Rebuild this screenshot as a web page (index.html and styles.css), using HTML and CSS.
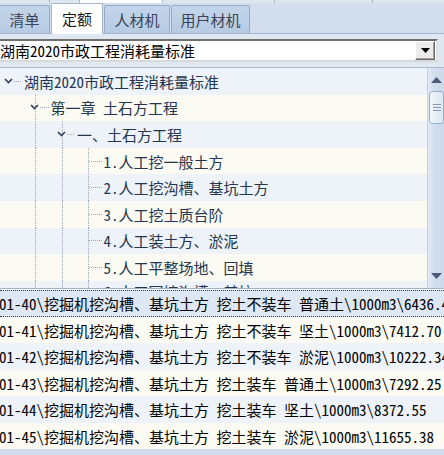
FILE: index.html
```html
<!DOCTYPE html>
<html>
<head>
<meta charset="utf-8">
<link rel="stylesheet" href="styles.css">
</head>
<body>
<div class="app">
  <div class="topstrip"><span class="ts ts-a"></span><span class="ts ts-b"></span><span class="ts ts-c"></span><span class="ts ts-d"></span><span class="ts ts-e"></span></div>
  <div class="tabbar">
    <div class="tab t1">清单</div>
    <div class="tab t2 active">定额</div>
    <div class="tab t3">人材机</div>
    <div class="tab t4">用户材机</div>
  </div>
  <div class="combo-wrap">
    <div class="combo">
      <span class="combo-text">湖南2020市政工程消耗量标准</span>
      <span class="combo-btn"><svg width="9" height="5" viewBox="0 0 9 5"><path d="M0 0H9L4.5 5Z" fill="#000"/></svg></span>
    </div>
  </div>
  <div class="tree-wrap">
    <div class="tree">
      <div class="row blue">
        <span class="cell node"><svg class="chev" width="9" height="6" viewBox="0 0 9 6"><polyline points="1,1 4.5,4.6 8,1" fill="none" stroke="#34445f" stroke-width="1.7"/></svg></span>
        <span class="label">湖南2020市政工程消耗量标准</span>
      </div>
      <div class="row cream">
        <span class="cell"></span>
        <span class="cell node vl"><svg class="chev" width="9" height="6" viewBox="0 0 9 6"><polyline points="1,1 4.5,4.6 8,1" fill="none" stroke="#34445f" stroke-width="1.7"/></svg></span>
        <span class="label">第一章 土石方工程</span>
      </div>
      <div class="row blue">
        <span class="cell"></span>
        <span class="cell vl"></span>
        <span class="cell node vl"><svg class="chev" width="9" height="6" viewBox="0 0 9 6"><polyline points="1,1 4.5,4.6 8,1" fill="none" stroke="#34445f" stroke-width="1.7"/></svg></span>
        <span class="label">一、土石方工程</span>
      </div>
      <div class="row cream">
        <span class="cell"></span><span class="cell vl"></span><span class="cell vl"></span>
        <span class="cell leaf"></span>
        <span class="label">1.人工挖一般土方</span>
      </div>
      <div class="row blue">
        <span class="cell"></span><span class="cell vl"></span><span class="cell vl"></span>
        <span class="cell leaf"></span>
        <span class="label">2.人工挖沟槽、基坑土方</span>
      </div>
      <div class="row cream">
        <span class="cell"></span><span class="cell vl"></span><span class="cell vl"></span>
        <span class="cell leaf"></span>
        <span class="label">3.人工挖土质台阶</span>
      </div>
      <div class="row blue">
        <span class="cell"></span><span class="cell vl"></span><span class="cell vl"></span>
        <span class="cell leaf"></span>
        <span class="label">4.人工装土方、淤泥</span>
      </div>
      <div class="row cream">
        <span class="cell"></span><span class="cell vl"></span><span class="cell vl"></span>
        <span class="cell leaf"></span>
        <span class="label">5.人工平整场地、回填</span>
      </div>
      <div class="row blue">
        <span class="cell"></span><span class="cell vl"></span><span class="cell vl"></span>
        <span class="cell leaf"></span>
        <span class="label last">6.人工回填沟槽、基坑</span>
      </div>
    </div>
    <div class="vscroll">
      <div class="sb-btn"><svg width="11" height="6" viewBox="0 0 11 6"><path d="M0 6H11L5.5 0Z" fill="#4d5a7a"/></svg></div>
      <div class="sb-track">
        <div class="sb-thumb"><span class="grip"></span><span class="grip"></span><span class="grip"></span></div>
      </div>
      <div class="sb-btn down"><svg width="11" height="6" viewBox="0 0 11 6"><path d="M0 0H11L5.5 6Z" fill="#4d5a7a"/></svg></div>
    </div>
  </div>
  <div class="list">
    <div class="lrow sel">01-40\挖掘机挖沟槽、基坑土方 挖土不装车 普通土\1000m3\6436.4</div>
    <div class="lrow cream">01-41\挖掘机挖沟槽、基坑土方 挖土不装车 坚土\1000m3\7412.70</div>
    <div class="lrow blue">01-42\挖掘机挖沟槽、基坑土方 挖土不装车 淤泥\1000m3\10222.34</div>
    <div class="lrow cream">01-43\挖掘机挖沟槽、基坑土方 挖土装车 普通土\1000m3\7292.25</div>
    <div class="lrow blue">01-44\挖掘机挖沟槽、基坑土方 挖土装车 坚土\1000m3\8372.55</div>
    <div class="lrow cream">01-45\挖掘机挖沟槽、基坑土方 挖土装车 淤泥\1000m3\11655.38</div>
  </div>
  <div class="bottom"></div>
</div>
</body>
</html>
```
FILE: styles.css
```css
* { box-sizing: border-box; margin: 0; padding: 0; }
html, body { width: 444px; height: 455px; overflow: hidden; }
body {
  background: #dbe5f1;
  font-family: "Noto Sans Mono CJK SC", "Noto Sans CJK SC", monospace;
  font-size: 15px;
}
.app { width: 444px; height: 455px; display: flex; flex-direction: column; overflow: hidden; }

.topstrip { height: 3px; display: flex; background: #dde5ef; flex: none; }
.ts { height: 3px; border-right: 1px solid #aab7c8; }
.ts-a { width: 50px; }
.ts-b { width: 30px; }
.ts-c { width: 83px; background: #fbfcfe; }
.ts-d { width: 112px; }
.ts-e { width: 98px; }

.tabbar {
  height: 31px; flex: none;
  background: #d2deed;
  border-bottom: 1px solid #a2b4cb;
  display: flex; align-items: flex-end;
}
.tab {
  height: 28px;
  margin-right: 1px;
  background: linear-gradient(#c3d5ea, #b6cae3);
  border: 1px solid #97abc5;
  border-bottom: none;
  border-radius: 2px 2px 0 0;
  color: #3a4454;
  text-align: center;
  line-height: 28px;
  margin-bottom: 0;
}
.t1 { width: 50px; border-left: none; }
.t2 { width: 52px; }
.t3 { width: 66px; }
.t4 { width: 79px; }
.tab.active {
  height: 32px;
  background: #ffffff;
  color: #1c1c1c;
  margin-bottom: -2px;
  line-height: 30px;
  border-color: #a6b8cf;
}

.combo-wrap { height: 33px; flex: none; padding-top: 5px; background: #dfe7f1; }
.combo {
  height: 23px;
  margin-left: -3px;
  width: 441px;
  background: #fff;
  border: 2px solid;
  border-color: #6f6f6f #e2e2e2 #d9d9d9 #6f6f6f;
  display: flex; align-items: center;
}
.combo-text { flex: 1; padding-left: 1px; color: #000; line-height: 19px; }
.combo-btn {
  width: 20px; height: 19px;
  background: #ececec;
  border: 1px solid;
  border-color: #ffffff #6a6a6a #6a6a6a #ffffff;
  box-shadow: inset -1px -1px 0 #a0a0a0;
  display: flex; align-items: center; justify-content: center;
  margin-right: 1px;
}

.tree-wrap {
  height: 221px; flex: none;
  border-top: 1px solid #a9bbd2;
  display: flex;
  overflow: hidden;
}
.tree { flex: 1; overflow: hidden; }
.row {
  height: 26.6px;
  display: flex; align-items: stretch;
  margin-left: -4.5px;
  padding-left: 4.5px;
  color: #22364f;
  white-space: nowrap;
}
.row > .cell:first-child { margin-left: -4.5px; }
.blue { background-color: #eef2f9; }
.cream { background-color: #fbfbf3; }
.cell { flex: none; width: 26.5px; display: flex; align-items: center; }
.vl {
  background-image: repeating-linear-gradient(to bottom, #98a3b5 0 1px, transparent 1px 2px);
  background-size: 1px 100%;
  background-position: 13px 0;
  background-repeat: no-repeat;
}
.node {
  background-image: repeating-linear-gradient(to right, #98a3b5 0 1px, transparent 1px 2px);
  background-size: 9px 1px;
  background-position: 18px 50%;
  background-repeat: no-repeat;
}
.node.vl {
  background-image:
    repeating-linear-gradient(to right, #98a3b5 0 1px, transparent 1px 2px),
    repeating-linear-gradient(to bottom, #98a3b5 0 1px, transparent 1px 2px);
  background-size: 9px 1px, 1px 100%;
  background-position: 18px 50%, 13px 0;
  background-repeat: no-repeat, no-repeat;
}
.leaf {
  background-image:
    repeating-linear-gradient(to right, #98a3b5 0 1px, transparent 1px 2px),
    repeating-linear-gradient(to bottom, #98a3b5 0 1px, transparent 1px 2px);
  background-size: 13px 1px, 1px 100%;
  background-position: 14px 50%, 13px 0;
  background-repeat: no-repeat, no-repeat;
}
.chev { margin-left: 8px; margin-top: -1px; display: block; }
.label { padding-left: 2px; display: flex; align-items: center; }
.label.last { margin-top: -6px; }

.vscroll {
  width: 17px; flex: none;
  background: linear-gradient(to right, #e3eaf4, #d2deed 40%, #cddaeb);
  border-left: 1px solid #c3d0e1;
  display: flex; flex-direction: column;
}
.sb-btn { height: 20px; flex: none; display: flex; align-items: center; justify-content: center; padding-top: 4px; }
.sb-btn.down { padding-top: 0; padding-bottom: 4px; }
.sb-track { flex: 1; padding-top: 3px; }
.sb-thumb {
  height: 33px;
  margin: 0 0 0 1px;
  border: 1px solid #9aaeca;
  border-radius: 3px;
  background: linear-gradient(to right, #f2f6fb, #dce5f1);
  display: flex; flex-direction: column; align-items: center; justify-content: center; gap: 2px;
}
.grip { width: 8px; height: 1px; background: #8496b2; }

.list {
  height: 161px; flex: none;
  border-top: 1px solid #a6b6cb;
  padding-top: 1px;
  background: #f4f6fa;
  overflow: hidden;
}
.lrow {
  height: 26.5px;
  line-height: 27px;
  white-space: nowrap;
  color: #000;
  padding-left: 0;
  text-indent: -1px;
  overflow: hidden;
}
.lrow.sel {
  background: #dee7f4;
  border-top: 1px dotted #3a3a3a;
  border-bottom: 1px dotted #3a3a3a;
  line-height: 25px;
}
.bottom { flex: 1; background: #cfdbeb; }
```
